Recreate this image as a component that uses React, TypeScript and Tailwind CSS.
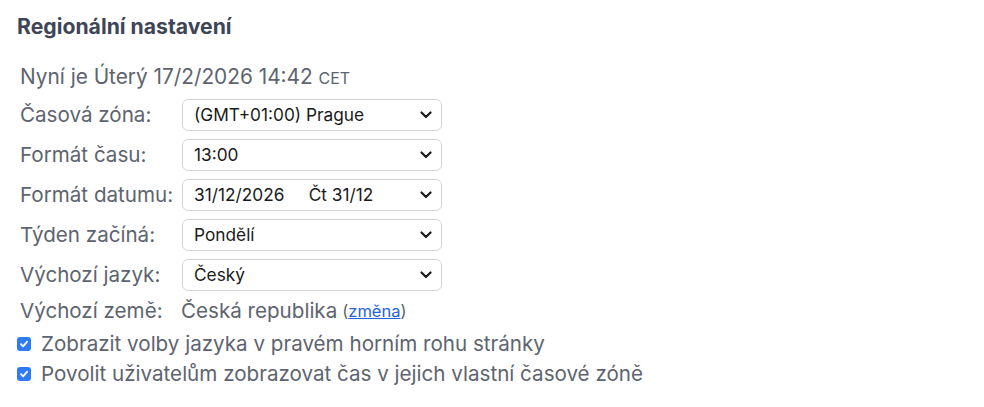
import { useState } from "react";

const rows = [
  { label: "Časová zóna:", value: "(GMT+01:00) Prague", options: ["(GMT+01:00) Prague", "(GMT+00:00) London"] },
  { label: "Formát času:", value: "13:00", options: ["13:00", "1:00 PM"] },
  { label: "Formát datumu:", value: "31/12/2026\u00a0\u00a0\u00a0\u00a0\u00a0Čt 31/12", options: ["31/12/2026\u00a0\u00a0\u00a0\u00a0\u00a0Čt 31/12", "12/31/2026"] },
  { label: "Týden začíná:", value: "Pondělí", options: ["Pondělí", "Neděle"] },
  { label: "Výchozí jazyk:", value: "Český", options: ["Český", "English"] },
];

function Select({ value, options }: { value: string; options: string[] }) {
  const [v, setV] = useState(value);
  return (
    <div className="relative w-[260px] h-[32px]">
      <select
        value={v}
        onChange={(e) => setV(e.target.value)}
        className="appearance-none w-full h-full rounded-[6px] border border-[#d4d6da] bg-white pl-[11px] pr-8 text-[17.3px] text-[#1a1a1a] outline-none"
      >
        {options.map((o) => (
          <option key={o} value={o}>
            {o}
          </option>
        ))}
      </select>
      <svg
        className="pointer-events-none absolute right-[10px] top-1/2 -translate-y-1/2"
        width="12"
        height="8"
        viewBox="0 0 12 8"
        fill="none"
      >
        <path d="M1.5 1.5 6 6l4.5-4.5" stroke="#1a1a1a" strokeWidth="2.2" strokeLinecap="round" strokeLinejoin="round" />
      </svg>
    </div>
  );
}

function Check({ label }: { label: string }) {
  const [on, setOn] = useState(true);
  return (
    <label className="flex items-center gap-[10px] h-[30px] cursor-pointer">
      <span
        onClick={() => setOn(!on)}
        className={`w-[14px] h-[14px] rounded-[3px] flex items-center justify-center ${on ? "bg-[#2f7bf5]" : "border border-gray-400 bg-white"}`}
      >
        {on && (
          <svg width="10" height="10" viewBox="0 0 10 10" fill="none">
            <path d="M2 5.2 4.1 7.3 8 2.8" stroke="white" strokeWidth="1.8" strokeLinecap="round" strokeLinejoin="round" />
          </svg>
        )}
      </span>
      <span className="text-[20.6px] text-[#5d6470]">{label}</span>
    </label>
  );
}

export default function App() {
  return (
    <div className="min-h-[407px] bg-white pl-[17px] pt-[13px] font-['Inter','Liberation_Sans',sans-serif]">
      <h2 className="text-[21.2px] font-bold text-[#3e4556] leading-[26px]">Regionální nastavení</h2>

      <div className="mt-[25px] pl-[3px] text-[20.8px] leading-[26px] text-[#5d6470]">
        Nyní je Úterý 17/2/2026 14:42 <span className="text-[16px]">CET</span>
      </div>

      <div className="mt-[8px] flex flex-col gap-[8px]">
        {rows.map((r) => (
          <div key={r.label} className="flex items-center">
            <span className="w-[165px] pl-[3px] text-[20.6px] text-[#5d6470]">{r.label}</span>
            <Select value={r.value} options={r.options} />
          </div>
        ))}
      </div>

      <div className="mt-[7px] flex items-center h-[26px] text-[20.6px] text-[#5d6470]">
        <span className="w-[164px] pl-[3px]">Výchozí země:</span>
        <span>Česká republika</span>
        <span className="ml-[5px] text-[16.5px]">
          (<a href="#" className="text-[#2563d8] underline">změna</a>)
        </span>
      </div>

      <div className="mt-[5px] flex flex-col">
        <Check label="Zobrazit volby jazyka v pravém horním rohu stránky" />
        <Check label="Povolit uživatelům zobrazovat čas v jejich vlastní časové zóně" />
      </div>
    </div>
  );
}
